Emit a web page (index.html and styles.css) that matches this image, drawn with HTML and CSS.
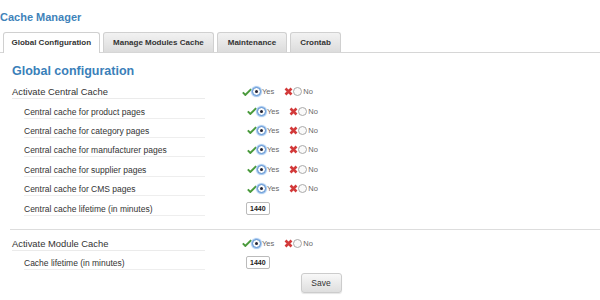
FILE: index.html
```html
<!DOCTYPE html>
<html lang="en">
<head>
    <meta charset="UTF-8">
    <title>Cache Manager</title>
    <link rel="stylesheet" href="styles.css">
</head>
<body>
<h1 class="title">Cache Manager</h1>
<ul class="tabs">
    <li class="tab active">Global Configuration</li>
    <li class="tab">Manage Modules Cache</li>
    <li class="tab">Maintenance</li>
    <li class="tab">Crontab</li>
</ul>
<div class="panel">
    <h2>Global configuration</h2>
    <div class="row">
        <span class="label">Activate Central Cache</span>
        <span class="opts">
            <svg class="ok" viewBox="0 0 12 9"><path d="M1 5l3 3 7-7" /></svg><span class="radio on"></span><span class="opt">Yes</span>
            <svg class="ko" viewBox="0 0 9 9"><path d="M1.5 1.5l6 6M7.5 1.5l-6 6" /></svg><span class="radio"></span><span class="opt">No</span>
        </span>
    </div>
    <div class="row sub">
        <span class="label">Central cache for product pages</span>
        <span class="opts">
            <svg class="ok" viewBox="0 0 12 9"><path d="M1 5l3 3 7-7" /></svg><span class="radio on"></span><span class="opt">Yes</span>
            <svg class="ko" viewBox="0 0 9 9"><path d="M1.5 1.5l6 6M7.5 1.5l-6 6" /></svg><span class="radio"></span><span class="opt">No</span>
        </span>
    </div>
    <div class="row sub">
        <span class="label">Central cache for category pages</span>
        <span class="opts">
            <svg class="ok" viewBox="0 0 12 9"><path d="M1 5l3 3 7-7" /></svg><span class="radio on"></span><span class="opt">Yes</span>
            <svg class="ko" viewBox="0 0 9 9"><path d="M1.5 1.5l6 6M7.5 1.5l-6 6" /></svg><span class="radio"></span><span class="opt">No</span>
        </span>
    </div>
    <div class="row sub">
        <span class="label">Central cache for manufacturer pages</span>
        <span class="opts">
            <svg class="ok" viewBox="0 0 12 9"><path d="M1 5l3 3 7-7" /></svg><span class="radio on"></span><span class="opt">Yes</span>
            <svg class="ko" viewBox="0 0 9 9"><path d="M1.5 1.5l6 6M7.5 1.5l-6 6" /></svg><span class="radio"></span><span class="opt">No</span>
        </span>
    </div>
    <div class="row sub">
        <span class="label">Central cache for supplier pages</span>
        <span class="opts">
            <svg class="ok" viewBox="0 0 12 9"><path d="M1 5l3 3 7-7" /></svg><span class="radio on"></span><span class="opt">Yes</span>
            <svg class="ko" viewBox="0 0 9 9"><path d="M1.5 1.5l6 6M7.5 1.5l-6 6" /></svg><span class="radio"></span><span class="opt">No</span>
        </span>
    </div>
    <div class="row sub">
        <span class="label">Central cache for CMS pages</span>
        <span class="opts">
            <svg class="ok" viewBox="0 0 12 9"><path d="M1 5l3 3 7-7" /></svg><span class="radio on"></span><span class="opt">Yes</span>
            <svg class="ko" viewBox="0 0 9 9"><path d="M1.5 1.5l6 6M7.5 1.5l-6 6" /></svg><span class="radio"></span><span class="opt">No</span>
        </span>
    </div>
    <div class="row sub">
        <span class="label">Central cache lifetime (in minutes)</span>
        <span class="opts"><span class="num">1440</span></span>
    </div>

    <hr class="sep">

    <div class="row">
        <span class="label">Activate Module Cache</span>
        <span class="opts">
            <svg class="ok" viewBox="0 0 12 9"><path d="M1 5l3 3 7-7" /></svg><span class="radio on"></span><span class="opt">Yes</span>
            <svg class="ko" viewBox="0 0 9 9"><path d="M1.5 1.5l6 6M7.5 1.5l-6 6" /></svg><span class="radio"></span><span class="opt">No</span>
        </span>
    </div>
    <div class="row sub">
        <span class="label">Cache lifetime (in minutes)</span>
        <span class="opts"><span class="num">1440</span></span>
    </div>
    <div class="actions">
        <button class="save">Save</button>
    </div>
</div>
</body>
</html>
```

FILE: styles.css
```css
*{margin:0;padding:0}
body{background:#fff;font-family:"Liberation Sans",Arial,sans-serif;color:#333;width:600px;height:300px;overflow:hidden}
ul{list-style:none}
.title{
    font-size:11px;
    font-weight:bold;
    color:#3f83ba;
    padding-top:11px;
    height:21px;
    line-height:12px;
}
/*tabs*/
.tabs{
    display:flex;
    gap:3px;
    padding-left:3px;
    border-bottom:1px solid #d6d6d6;
    height:20px;
}
.tab{
    font-size:8px;
    font-weight:bold;
    color:#333;
    padding:0 9.5px;
    line-height:19px;
    height:19px;
    border:1px solid #d0d0d0;
    border-bottom:none;
    border-radius:3px 3px 0 0;
    background:linear-gradient(#f2f2f2,#dcdcdc);
}
.tab.active{background:#fff;height:20px;padding:0 7.5px}
/*form*/
.panel{padding-left:12px}
h2{
    font-size:12.5px;
    color:#3a80b9;
    font-weight:bold;
    padding-top:9px;
    height:20px;
    line-height:19px;
}
.row{display:flex;align-items:center;height:19.4px}
.label{
    width:193px;
    font-size:9.4px;
    line-height:12px;
    padding-top:2px;
    border-bottom:1px solid #ebebeb;
}
.sub .label{margin-left:12px;width:181px;font-size:8.5px;border-bottom-color:#eee}
.opts{display:flex;align-items:center;margin-left:37px;font-size:7.5px;color:#666}
.sub .opts{margin-left:42px}
.ok{width:10px;height:8px;fill:none;stroke:#4a9a3c;stroke-width:2.4}
.ko{width:9px;height:9px;fill:none;stroke:#d23a3a;stroke-width:2.6;margin-left:10px}
.radio{
    width:9px;height:9px;
    border-radius:50%;
    border:1px solid #aaa;
    background:#fafafa;
    box-sizing:border-box;
    position:relative;
}
.radio.on{border-color:#5a8fd0;box-shadow:0 0 1px 1px #9bc2ee}
.radio.on:after{
    content:'';
    position:absolute;
    width:3px;height:3px;
    left:2px;top:2px;
    border-radius:50%;
    background:#223;
}
.opt{margin-left:1px}
.num{
    font-size:7px;
    font-weight:bold;
    color:#222;
    border:1px solid #bbb;
    border-radius:2px;
    padding:1px 3px;
    line-height:9px;
    margin-left:-1px;
}
.sep{border:none;border-top:1px solid #ddd;margin:11px 0 4px -2px}
.actions{display:flex;justify-content:center;padding-top:0;padding-left:30px}
.save{
    font-family:"Liberation Sans",Arial,sans-serif;
    font-size:8.5px;
    color:#333;
    width:41px;height:20px;
    border:1px solid #ccc;
    border-radius:3px;
    background:linear-gradient(#f8f8f8,#dedede);
    box-shadow:0 1px 1px rgba(0,0,0,.1);
}
```
